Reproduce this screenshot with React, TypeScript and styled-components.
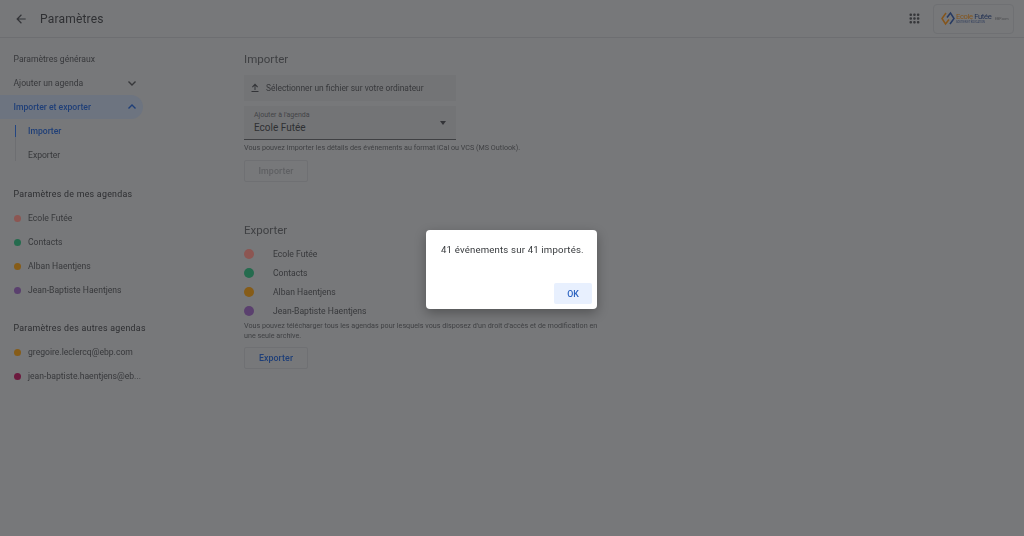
import React from 'react';
import styled, { createGlobalStyle } from 'styled-components';

const GlobalStyle = createGlobalStyle`
  html, body {
    margin: 0;
    padding: 0;
    height: 100%;
    background: #77787a;
    overflow: hidden;
  }
  body {
    font-family: Roboto, "Liberation Sans", sans-serif;
    color: #3a3b3e;
  }
`;

const myAgendas = [
  { name: 'Ecole Futée', color: '#8c5652' },
  { name: 'Contacts', color: '#256b4e' },
  { name: 'Alban Haentjens', color: '#865c18' },
  { name: 'Jean-Baptiste Haentjens', color: '#5a406e' },
];

const otherAgendas = [
  { name: 'gregoire.leclercq@ebp.com', color: '#865c18' },
  { name: 'jean-baptiste.haentjens@eb...', color: '#6c1a3e' },
];

const App: React.FC = () => (
  <Page>
    <GlobalStyle />
    <Header>
      <BackButton aria-label="Retour">
        <svg width="14" height="14" viewBox="0 0 24 24" fill="#333438">
          <path d="M20 11H7.83l5.59-5.59L12 4l-8 8 8 8 1.41-1.41L7.83 13H20v-2z" />
        </svg>
      </BackButton>
      <PageTitle>Paramètres</PageTitle>
      <HeaderRight>
        <svg width="11" height="11" viewBox="0 0 11 11" fill="#36373a">
          {[0.5, 4.2, 7.9].map((y) =>
            [0.5, 4.2, 7.9].map((x) => <rect key={`${x}-${y}`} x={x} y={y} width="2.5" height="2.5" rx="1" />),
          )}
        </svg>
        <LogoBox>
          <svg width="14" height="15" viewBox="0 0 14 15" fill="none" strokeWidth="1.5">
            <path d="M5 2 L1 7.5 L4.5 13 L8 8.5" stroke="#85551a" />
            <path d="M9 13 L13 7.5 L9.5 2 L6 6.5" stroke="#263a62" />
          </svg>
          <LogoText>
            <LogoName>
              Ecole <LogoAccent>Futée</LogoAccent>
            </LogoName>
            <LogoTagline>SOUTIEN ET ÉDUCATION</LogoTagline>
          </LogoText>
          <LogoPartner>EBP.com</LogoPartner>
        </LogoBox>
      </HeaderRight>
    </Header>

    <Body>
      <Sidebar>
        <NavItem>Paramètres généraux</NavItem>
        <NavItem>
          Ajouter un agenda
          <Chevron viewBox="0 0 12 12">
            <path d="M2.5 4.5 6 8l3.5-3.5" />
          </Chevron>
        </NavItem>
        <NavItem $active>
          Importer et exporter
          <Chevron viewBox="0 0 12 12">
            <path d="M2.5 7.5 6 4l3.5 3.5" />
          </Chevron>
        </NavItem>
        <SubItem $active>Importer</SubItem>
        <SubItem>Exporter</SubItem>

        <SectionTitle>Paramètres de mes agendas</SectionTitle>
        {myAgendas.map((a) => (
          <AgendaItem key={a.name}>
            <SmallDot $color={a.color} />
            {a.name}
          </AgendaItem>
        ))}

        <SectionTitle>Paramètres des autres agendas</SectionTitle>
        {otherAgendas.map((a) => (
          <AgendaItem key={a.name}>
            <SmallDot $color={a.color} />
            {a.name}
          </AgendaItem>
        ))}
      </Sidebar>

      <Main>
        <Heading>Importer</Heading>
        <FileButton>
          <svg width="12" height="12" viewBox="0 0 24 24" fill="#333438">
            <path d="M5 20h14v-2H5v2zM12 3 6 9.5l1.4 1.4L11 7.3V16h2V7.3l3.6 3.6L18 9.5 12 3z" />
          </svg>
          Sélectionner un fichier sur votre ordinateur
        </FileButton>
        <SelectField>
          <SelectLabel>Ajouter à l'agenda</SelectLabel>
          <SelectValue>Ecole Futée</SelectValue>
          <SelectArrow />
        </SelectField>
        <Hint>Vous pouvez importer les détails des événements au format iCal ou VCS (MS Outlook).</Hint>
        <OutlineButton $disabled>Importer</OutlineButton>

        <ExportHeading>Exporter</ExportHeading>
        <ExportList>
          {myAgendas.map((a) => (
            <ExportRow key={a.name}>
              <BigDot $color={a.color} />
              {a.name}
            </ExportRow>
          ))}
        </ExportList>
        <ExportHint>
          Vous pouvez télécharger tous les agendas pour lesquels vous disposez d'un droit d'accès et de modification en
          une seule archive.
        </ExportHint>
        <ExportButton>Exporter</ExportButton>
      </Main>
    </Body>

    <Overlay>
      <Dialog>
        <DialogText>41 événements sur 41 importés.</DialogText>
        <DialogActions>
          <OkButton>OK</OkButton>
        </DialogActions>
      </Dialog>
    </Overlay>
  </Page>
);

const Page = styled.div`
  position: relative;
  width: 1024px;
  height: 536px;
  overflow: hidden;
  filter: blur(0.45px);
`;

const Header = styled.header`
  display: flex;
  align-items: center;
  height: 37px;
  border-bottom: 1px solid #6d6e71;
  padding: 0 10px 0 14px;
`;

const BackButton = styled.span`
  display: flex;
  width: 14px;
  height: 14px;
  margin-right: 12px;
`;

const PageTitle = styled.h1`
  margin: 0;
  font-size: 12px;
  font-weight: 400;
  letter-spacing: 0.2px;
  color: #2f3033;
`;

const HeaderRight = styled.div`
  display: flex;
  align-items: center;
  gap: 13px;
  margin-left: auto;
`;

const LogoBox = styled.div`
  display: flex;
  align-items: center;
  gap: 1px;
  box-sizing: border-box;
  width: 81px;
  height: 30px;
  padding-left: 7px;
  border: 1px solid #6f7073;
  border-radius: 4px;
`;

const LogoText = styled.div`
  display: flex;
  flex-direction: column;
  width: 28px;
  white-space: nowrap;
`;

const LogoName = styled.span`
  font-size: 7.6px;
  line-height: 9px;
  letter-spacing: -0.35px;
  color: #85551a;
`;

const LogoAccent = styled.span`
  color: #1f2f52;
`;

const LogoTagline = styled.span`
  font-size: 2.6px;
  line-height: 4px;
  color: #2d3b5c;
`;

const LogoPartner = styled.span`
  margin-left: 10px;
  font-size: 3.5px;
  color: #4c4d50;
`;

const Body = styled.div`
  display: flex;
`;

const Sidebar = styled.nav`
  width: 143px;
  padding-top: 9px;
  flex-shrink: 0;
`;

const NavItem = styled.div<{ $active?: boolean }>`
  display: flex;
  align-items: center;
  justify-content: space-between;
  height: 24px;
  padding: 0 5px 0 13.5px;
  font-size: 8.6px;
  border-radius: 0 12px 12px 0;
  color: ${({ $active }) => ($active ? '#1f3f78' : '#37383b')};
  background: ${({ $active }) => ($active ? '#6d7480' : 'transparent')};
  font-weight: ${({ $active }) => ($active ? 500 : 400)};
`;

const Chevron = styled.svg`
  width: 12px;
  height: 12px;
  fill: none;
  stroke: currentColor;
  stroke-width: 1.4;
`;

const SubItem = styled.div<{ $active?: boolean }>`
  position: relative;
  display: flex;
  align-items: center;
  height: 24px;
  padding-left: 28px;
  font-size: 8.6px;
  color: ${({ $active }) => ($active ? '#1f3f78' : '#37383b')};
  font-weight: ${({ $active }) => ($active ? 500 : 400)};

  &::before {
    content: '';
    position: absolute;
    left: 15px;
    width: 1px;
    top: ${({ $active }) => ($active ? '6px' : '-6px')};
    bottom: 6px;
    background: ${({ $active }) => ($active ? '#234682' : '#6d6e71')};
  }
`;

const SectionTitle = styled.div`
  display: flex;
  align-items: center;
  height: 24px;
  margin-top: 15px;
  padding-left: 13.5px;
  font-size: 8.8px;
  letter-spacing: 0.28px;
  white-space: nowrap;
  color: #2c2d30;

  nav > & ~ & {
    margin-top: 14px;
  }
`;

const AgendaItem = styled.div`
  display: flex;
  align-items: center;
  gap: 7px;
  height: 24px;
  padding-left: 14px;
  font-size: 8.6px;
  white-space: nowrap;
  color: #37383b;
`;

const SmallDot = styled.span<{ $color: string }>`
  width: 7px;
  height: 7px;
  border-radius: 50%;
  flex-shrink: 0;
  background: ${({ $color }) => $color};
`;

const Main = styled.main`
  width: 360px;
  margin-left: 101px;
  padding-top: 14px;
`;

const Heading = styled.h2`
  margin: 0 0 9px;
  font-size: 11.5px;
  line-height: 14px;
  font-weight: 400;
  color: #3f4043;
`;

const FileButton = styled.div`
  display: flex;
  align-items: center;
  gap: 5px;
  box-sizing: border-box;
  width: 212px;
  height: 26px;
  padding-left: 5px;
  font-size: 8.4px;
  color: #37383b;
  background: #737476;
`;

const SelectField = styled.div`
  position: relative;
  box-sizing: border-box;
  width: 212px;
  height: 34px;
  margin-top: 5px;
  padding: 5px 10px 0;
  background: #737476;
  border-bottom: 1px solid #3f4043;
`;

const SelectLabel = styled.div`
  font-size: 7px;
  line-height: 9px;
  color: #434447;
`;

const SelectValue = styled.div`
  margin-top: 2px;
  font-size: 10px;
  line-height: 12px;
  color: #2f3033;
`;

const SelectArrow = styled.span`
  position: absolute;
  top: 15px;
  right: 10px;
  border-left: 3.5px solid transparent;
  border-right: 3.5px solid transparent;
  border-top: 4px solid #333438;
`;

const Hint = styled.p`
  margin: 3px 0 0;
  font-size: 7.2px;
  line-height: 10.5px;
  color: #3f4043;
`;

const OutlineButton = styled.div<{ $disabled?: boolean }>`
  display: flex;
  align-items: center;
  justify-content: center;
  box-sizing: border-box;
  width: 64px;
  height: 22px;
  margin-top: 6px;
  font-size: 8.8px;
  font-weight: 500;
  letter-spacing: 0.1px;
  border-radius: 2px;
  border: 1px solid #6f7073;
  color: ${({ $disabled }) => ($disabled ? '#5f6063' : '#1f3f78')};
`;

const ExportButton = styled(OutlineButton)`
  margin-top: 5px;
`;

const ExportHeading = styled(Heading)`
  margin: 41px 0 7px;
`;

const ExportList = styled.div`
  display: flex;
  flex-direction: column;
  padding-top: 1px;
`;

const ExportRow = styled.div`
  display: flex;
  align-items: center;
  gap: 19px;
  height: 19px;
  font-size: 8.6px;
  color: #37383b;
`;

const BigDot = styled.span<{ $color: string }>`
  width: 10px;
  height: 10px;
  border-radius: 50%;
  background: ${({ $color }) => $color};
`;

const ExportHint = styled(Hint)`
  margin-top: 0;
`;

const Overlay = styled.div`
  position: absolute;
  inset: 0;
  display: flex;
  align-items: flex-start;
  justify-content: center;
`;

const Dialog = styled.div`
  box-sizing: border-box;
  width: 171px;
  height: 79px;
  margin: 230px 1px 0 0;
  padding: 14px 5px 5px 15px;
  background: #fff;
  border-radius: 4px;
  box-shadow: 0 4px 12px rgba(0, 0, 0, 0.3);
`;

const DialogText = styled.div`
  font-size: 9.6px;
  line-height: 12px;
  letter-spacing: 0.18px;
  color: #36393c;
`;

const DialogActions = styled.div`
  display: flex;
  justify-content: flex-end;
  margin-top: 27px;
`;

const OkButton = styled.div`
  display: flex;
  align-items: center;
  justify-content: center;
  width: 38px;
  height: 21px;
  border-radius: 2px;
  font-size: 8.8px;
  font-weight: 500;
  color: #2a62c0;
  background: #e8f0fe;
`;

export default App;
